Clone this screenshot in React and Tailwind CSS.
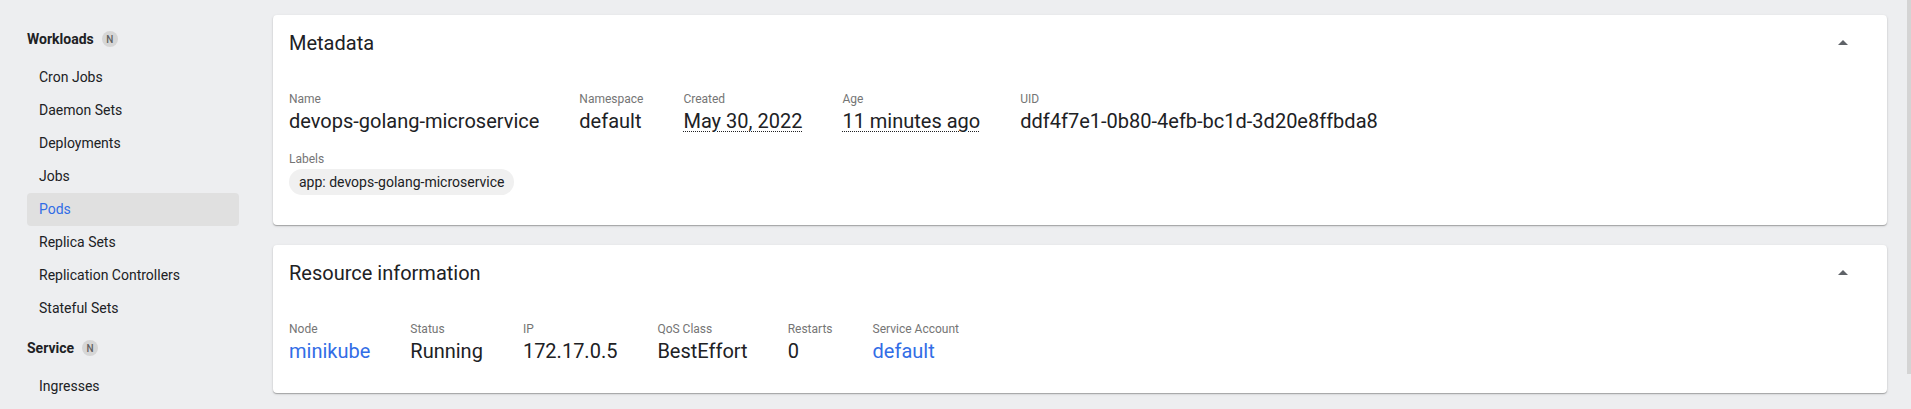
const workloads = [
  'Cron Jobs',
  'Daemon Sets',
  'Deployments',
  'Jobs',
  'Pods',
  'Replica Sets',
  'Replication Controllers',
  'Stateful Sets'
]

function NavHeader({ title, className = '' }) {
  return (
    <div className={`flex h-8 items-center gap-2 ${className}`}>
      <span className="text-[14px] font-bold text-[#202124]">{title}</span>
      <span className="flex h-4 w-4 items-center justify-center rounded-full bg-[#d6d6d6] text-[10px] font-medium text-[#616161]">
        N
      </span>
    </div>
  )
}

function NavItem({ label, active }) {
  return (
    <div
      className={`flex h-[33px] w-[212px] items-center rounded-sm pl-3 text-[14px] ${
        active ? 'bg-[#e0e0e0] text-[#326de6]' : 'text-[#202124]'
      }`}
    >
      {label}
    </div>
  )
}

function Chevron() {
  return (
    <svg width="24" height="24" viewBox="0 0 24 24" className="fill-[#5f6368]">
      <path d="M7 14l5-5 5 5z" />
    </svg>
  )
}

function Field({ label, children }) {
  return (
    <div className="flex flex-col">
      <span className="text-[12px] leading-4 text-[#757575]">{label}</span>
      <span className="text-[20px] leading-7 text-[#202124]">{children}</span>
    </div>
  )
}

function Dotted({ children }) {
  return (
    <span className="underline decoration-dotted decoration-[#202124] decoration-1 underline-offset-[3px]">
      {children}
    </span>
  )
}

function Link({ children }) {
  return <span className="text-[#326de6]">{children}</span>
}

function Card({ title, children, className = '' }) {
  return (
    <div className="rounded bg-white shadow-[0_1px_1px_rgba(0,0,0,0.25),0_1px_3px_rgba(0,0,0,0.12)]">
      <div className="flex h-14 items-center justify-between pl-4 pr-[32px]">
        <span className="text-[20px] text-[#202124]">{title}</span>
        <Chevron />
      </div>
      <div className={`px-4 pt-5 ${className}`}>{children}</div>
    </div>
  )
}

export default function App() {
  return (
    <div className="flex h-[409px] w-full overflow-hidden bg-[#edeef0] font-['Roboto','Liberation_Sans',sans-serif]">
      {/* Sidebar */}
      <aside className="w-[273px] shrink-0 pl-[27px]">
        <NavHeader title="Workloads" className="mt-[23px]" />
        <div className="mt-[6px] flex flex-col">
          {workloads.map((w) => (
            <NavItem key={w} label={w} active={w === 'Pods'} />
          ))}
        </div>
        <NavHeader title="Service" className="mt-[7px]" />
        <div className="mt-[6px]">
          <NavItem label="Ingresses" />
        </div>
      </aside>

      {/* Content */}
      <main className="flex flex-1 flex-col gap-5 pr-5 pt-[15px]">
        <Card title="Metadata" className="pb-[30px]">
          <div className="flex gap-10">
            <Field label="Name">devops-golang-microservice</Field>
            <Field label="Namespace">default</Field>
            <Field label="Created">
              <Dotted>May 30, 2022</Dotted>
            </Field>
            <Field label="Age">
              <Dotted>11 minutes ago</Dotted>
            </Field>
            <Field label="UID">ddf4f7e1-0b80-4efb-bc1d-3d20e8ffbda8</Field>
          </div>
          <div className="mt-4 flex flex-col items-start">
            <span className="text-[12px] leading-4 text-[#757575]">Labels</span>
            <span className="mt-0.5 flex h-[26px] items-center rounded-full bg-[#f0f0f0] px-2.5 text-[14px] text-[#202124]">
              app: devops-golang-microservice
            </span>
          </div>
        </Card>

        <Card title="Resource information" className="pb-7">
          <div className="flex gap-10">
            <Field label="Node">
              <Link>minikube</Link>
            </Field>
            <Field label="Status">Running</Field>
            <Field label="IP">172.17.0.5</Field>
            <Field label="QoS Class">BestEffort</Field>
            <Field label="Restarts">0</Field>
            <Field label="Service Account">
              <Link>default</Link>
            </Field>
          </div>
        </Card>
      </main>

      {/* Scrollbar */}
      <div className="h-[374px] w-1 shrink-0 bg-[#d4d4d4]" />
    </div>
  )
}
